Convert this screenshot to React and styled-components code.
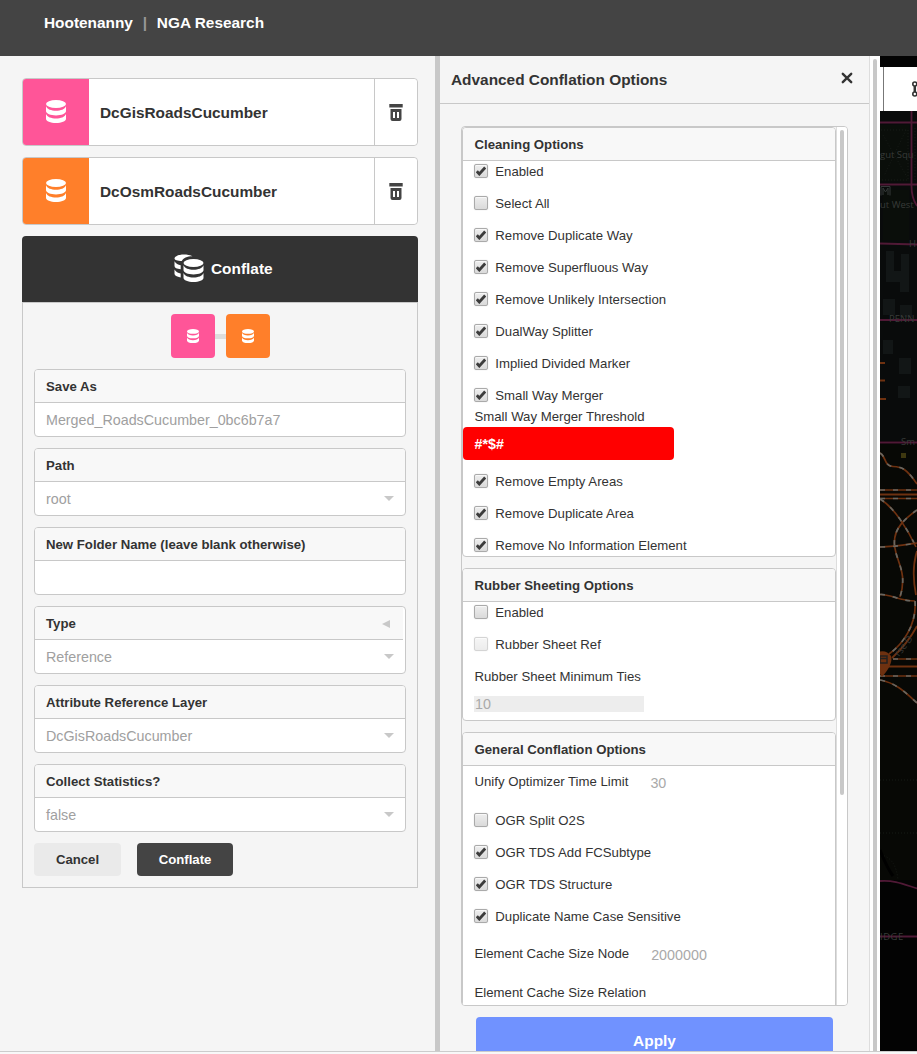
import React from "react";
import styled, { createGlobalStyle } from "styled-components";

const GlobalStyle = createGlobalStyle`
  *, *::before, *::after { box-sizing: border-box; }
  html, body { margin: 0; padding: 0; height: 100%; overflow: hidden; }
  body {
    font-family: "Liberation Sans", Arial, sans-serif;
    font-size: 13.2px;
    color: #333;
    background: #f5f5f5;
  }
  button { font-family: inherit; cursor: pointer; }
  svg { flex-shrink: 0; }
`;

const LINE = "#c8c8c8";

const Page = styled.div`
  display: flex;
  flex-direction: column;
  width: 917px;
  height: 1054px;
`;

const Header = styled.header`
  display: flex;
  flex: 0 0 56px;
  align-items: flex-start;
  gap: 9.8px;
  padding: 14px 0 0 44px;
  background: #444;
  color: #fff;
  font-size: 15.4px;
  font-weight: bold;
  line-height: 18px;
`;

const HeaderDivider = styled.span`
  color: #999;
`;

const Main = styled.main`
  display: flex;
  flex: 0 0 995px;
  overflow: hidden;
`;

const Footer = styled.footer`
  flex: 1;
  border-top: 1px solid #ccc;
  background: #f8f8f8;
`;

const Sidebar = styled.aside`
  display: flex;
  flex: 0 0 440px;
  flex-direction: column;
  gap: 11px;
  padding: 22px 17px 0 22px;
  border-right: 5px solid ${LINE};
  background: #f5f5f5;
`;

const LayerCard = styled.div`
  display: flex;
  height: 68px;
  border: 1px solid ${LINE};
  border-radius: 4px;
  background: #fff;
`;

const LayerSwatch = styled.div`
  display: flex;
  align-items: center;
  justify-content: center;
  width: ${(p) => p.$size}px;
  height: ${(p) => p.$size}px;
  padding-bottom: ${(p) => p.$lift || 0}px;
  border-radius: ${(p) => p.$radius};
  background: ${(p) => p.$color};
`;

const LayerName = styled.div`
  flex: 1;
  padding-left: 11px;
  font-size: 15.4px;
  font-weight: bold;
  line-height: 67px;
`;

const TrashButton = styled.button`
  display: flex;
  align-items: center;
  justify-content: center;
  width: 43px;
  padding: 0;
  border: 0;
  border-left: 1px solid ${LINE};
  border-radius: 0 4px 4px 0;
  background: #fff;
`;

const ConflateHeader = styled.div`
  display: flex;
  align-items: center;
  gap: 7px;
  height: 66px;
  padding-left: 152px;
  border-radius: 4px 4px 0 0;
  background: #333;
  color: #fff;
  font-size: 15.4px;
  font-weight: bold;
  line-height: 17px;

  svg { margin-bottom: 2px; }
`;

const ConflateTitle = styled.span`
  padding-bottom: 1px;
`;

const ConflateBody = styled.div`
  display: flex;
  flex-direction: column;
  gap: 11px;
  padding: 11px;
  border: 1px solid ${LINE};
`;

const SourcePair = styled.div`
  display: flex;
  align-items: center;
  padding-left: 137px;
`;

const SourceLink = styled.span`
  width: 11px;
  height: 5px;
  background: #ddd;
`;

const FieldBox = styled.div`
  height: 68px;
  border: 1px solid ${LINE};
  border-radius: 4px;
  background: #fff;
  overflow: hidden;
`;

const FieldLabel = styled.div`
  display: flex;
  align-items: center;
  justify-content: space-between;
  height: 33px;
  margin-right: ${(p) => (p.$inset ? "2px" : "0")};
  padding: 0 13px 0 11px;
  border-bottom: 1px solid ${LINE};
  background: #f8f8f8;
  font-weight: bold;

  svg { margin-top: 2px; }
`;

const FieldValue = styled.div`
  display: flex;
  align-items: center;
  justify-content: space-between;
  height: 33px;
  padding: 1px 11px 0 11px;
  color: #a0a0a0;
  font-size: 14.3px;

  svg { margin-bottom: 2px; }
`;

const ButtonRow = styled.div`
  display: flex;
  gap: 16px;
`;

const FormButton = styled.button`
  width: ${(p) => p.$width}px;
  height: 33px;
  padding: 0;
  border: 0;
  border-radius: 4px;
  background: ${(p) => (p.$primary ? "#444" : "#eaeaea")};
  color: ${(p) => (p.$primary ? "#fff" : "#333")};
  font-size: 13.2px;
  font-weight: bold;
`;

const AdvancedPanel = styled.section`
  flex: 0 0 430px;
  border-right: 1px solid #ddd;
  background: #f5f5f5;
`;

const PanelHeader = styled.div`
  display: flex;
  align-items: center;
  justify-content: space-between;
  height: 48px;
  padding: 0 16px 0 11px;
  border-bottom: 1px solid ${LINE};
  font-size: 15.4px;
  font-weight: bold;

  svg { margin-bottom: 3px; }
`;

const OptionsBox = styled.div`
  display: flex;
  width: 387px;
  height: 880px;
  margin: 22px 0 0 21px;
  border: 1px solid ${LINE};
  border-radius: 4px;
  overflow: hidden;
`;

const OptionsList = styled.div`
  display: flex;
  flex: 0 0 374px;
  flex-direction: column;
  gap: 11px;
`;

const ScrollTrack = styled.div`
  flex: 1;
  padding: 3px 0 0 3px;
  border-left: 1px solid #ddd;
  background: #fff;
`;

const ScrollThumb = styled.div`
  width: 4px;
  height: ${(p) => p.$height}px;
  border-radius: 2px;
  background: #c8c8c8;
`;

const OptionSection = styled.div`
  flex: 0 0 ${(p) => p.$height}px;
  border: 1px solid ${LINE};
  border-radius: 4px;
  background: #fff;
  overflow: hidden;
`;

const SectionTitle = styled.div`
  height: 33px;
  padding-left: 11.5px;
  border-bottom: 1px solid ${LINE};
  background: #f8f8f8;
  font-weight: bold;
  line-height: 33px;
`;

const CheckRow = styled.label`
  display: flex;
  align-items: center;
  gap: 7px;
  height: 20px;
  margin-bottom: ${(p) => (p.$tight ? 0 : 12)}px;
  padding-left: 11px;
`;

const CheckMarkBox = styled.span`
  display: flex;
  align-items: center;
  justify-content: center;
  width: 14.3px;
  height: 14.3px;
  border: 1px solid #aaa;
  border-radius: 2px;
  background: linear-gradient(#eee, #dadada);
  box-shadow: inset 0 1px 0 rgba(255, 255, 255, 0.6), 0 0 1px rgba(0, 0, 0, 0.25);
  opacity: ${(p) => (p.$disabled ? 0.5 : 1)};
`;

const PlainLabel = styled.div`
  height: ${(p) => p.$height}px;
  padding-left: 11.5px;
  line-height: ${(p) => p.$height + 1}px;
`;

const ErrorInput = styled.div`
  width: 211px;
  height: 33px;
  margin-bottom: 11px;
  padding-left: 11.5px;
  border-radius: 4px;
  background: #f00;
  color: #fff;
  font-size: 14.3px;
  font-weight: bold;
  line-height: 35px;
`;

const DisabledInput = styled.div`
  width: 170px;
  height: 16px;
  margin: 10px 0 0 11px;
  padding-left: 1px;
  background: #ededed;
  color: #a9a9a9;
  font-size: 14.3px;
  line-height: 17px;
`;

const ValueRow = styled.div`
  display: flex;
  gap: 22px;
  height: 32px;
  margin-bottom: 12px;
  padding-left: 11.5px;
  line-height: 32px;
`;

const RowValue = styled.span`
  padding-top: 1px;
  color: #a9a9a9;
  font-size: 14.3px;
`;

const ApplyButton = styled.button`
  display: block;
  width: 357px;
  height: 48px;
  margin: 11px 0 0 36px;
  padding: 0;
  border: 0;
  border-radius: 4px;
  background: #7092ff;
  color: #fff;
  font-size: 15.4px;
  font-weight: bold;
`;

const PageScroll = styled.div`
  flex: 0 0 10px;
  padding: 3px 0 0 3px;
  background: #fff;
`;

const PageThumb = styled.div`
  width: 4px;
  height: 992px;
  border-radius: 2px 2px 0 0;
  background: #c8c8c8;
`;

const MapArea = styled.div`
  flex: 1;
  height: 995px;
  background: #030303;
  overflow: hidden;
`;

const Cylinder = () => (
  <>
    <ellipse cx="10" cy="4" rx="10" ry="4" />
    <path d="M0 6.200C1.200 9.200 5.200 10.700 10 10.700s8.800-1.500 10-4.500V11c0 2.600-4.500 4.400-10 4.400S0 13.600 0 11z" />
    <path d="M0 14C1.200 17 5.200 18.500 10 18.500s8.800-1.500 10-4.500v4.700c0 2.600-4.500 4.300-10 4.300S0 21.300 0 18.700z" />
  </>
);

const DatabaseIcon = ({ width, height }) => (
  <svg width={width} height={height} viewBox="0 0 20 23" fill="#fff" preserveAspectRatio="none">
    <Cylinder />
  </svg>
);

const ConflateIcon = () => (
  <svg width="30" height="28" viewBox="0 0 30 28" fill="#fff">
    <path d="M.5 4.500C1 2 5 .5 10 .5c3.400 0 6.500.6 8.500 1.800-5.500.1-9.300 1.700-10.700 4.700C3.500 6.900.5 6 .5 4.500z" />
    <path d="M.5 7.300c1.300 2.300 3.600 3.500 6.200 4v4C2.800 14.800.5 13.800.5 12zM.5 15.500c1.300 2.300 3.600 3.500 6.200 4v4C2.800 22.500.5 21.500.5 19.700z" />
    <g transform="translate(9.500 5)">
      <Cylinder />
    </g>
  </svg>
);

const TrashIcon = () => (
  <svg width="14" height="17" viewBox="0 0 14 17" fill="#444" fillRule="evenodd">
    <path d="M.3 0h13.400v3.500H.3z" />
    <path d="M1.500 5h11v10q0 2-2 2h-7q-2 0-2-2zM4 8v6h2V8zM8 8v6h2V8z" />
  </svg>
);

const CloseIcon = () => (
  <svg width="12" height="12" viewBox="0 0 12 12" stroke="#333" strokeWidth="2.400" strokeLinecap="round">
    <path d="M1.800 1.800l8.400 8.400M10.200 1.800l-8.400 8.400" />
  </svg>
);

const CheckIcon = () => (
  <svg width="10" height="10" viewBox="0 0 10 10" fill="none" stroke="#3c3c3c" strokeWidth="2.800">
    <path d="M.8 5.200L3.300 8 9.200 1.500" />
  </svg>
);

const CaretIcon = () => (
  <svg width="10" height="5" viewBox="0 0 10 5" fill="#c8c8c8">
    <path d="M0 0h10L5 5z" />
  </svg>
);

const LeftCaretIcon = () => (
  <svg width="8" height="8" viewBox="0 0 8 8" fill="#c8c8c8">
    <path d="M8 0v8L0 4z" />
  </svg>
);

const paths = [
  "M880 453C886 456 884 466 893 466.500S906 468 917 484",
  "M880 490H917M880 498.500H917",
  "M880 499C894 507 908 530 916 547",
  "M917 510C906 518 893 528 894.500 545S908 572 900 597",
  "M880 547C893 547 904 545 917 543",
  "M880 594.500C890 594 900 601 915 601",
  "M915 601C917 625 902 645 889 654",
  "M893 659H917M880 676H917",
  "M880 680C896 683 905 692 917 703",
];

const MapView = () => (
  <svg width="37" height="995" viewBox="880 56 37 995" fill="none">
    <rect x="880" y="111" width="37" height="330" fill="#090b0b" />
    <rect x="880" y="444" width="37" height="436" fill="#070805" />
    <g fill="#0a0e0a">
      <rect x="880" y="125" width="29" height="56" />
      <path d="M883 190h26v50h-26z" />
    </g>
    <g fill="#121616">
      <path d="M886 251h8v20h7v-17h8v38h-9v-10h-14zM883 299h12v16h-12zM900 305h12v12h-12z" />
      <path d="M899 358h12v16h-12zM898 386h12v12h-12zM883 340h10v14h-10z" />
    </g>
    <g stroke="#171b17" strokeDasharray="1 2">
      <path d="M881 130h27v50h-27M883 135l24 42M906 130l-22 46M915 128v52M880 780H917M880 833H917M881 855Q896 858 898 880" />
    </g>
    <g stroke="#501936" strokeWidth="1.800">
      <path d="M880 122.500H917M880 184.500H917M880 243.500L917 244.500M880 320H917M880 442.500H917M880 881C895 880 903 884 917 888.500M880 936.500H917" />
      <path d="M911.500 111V186Q911.500 198 917 206" />
    </g>
    <path d="M880 850Q887 868 893 876" stroke="#000" strokeWidth="3" />
    <g stroke="#6e3110" strokeWidth="1.800">
      <path d="M880 363h5M880 380.500h5M880 399h6M880 494.500H917M880 666.500H917" />
      <path d="M917 551Q911 570 916 595M917 626Q908 643 892 658" />
    </g>
    {paths.map((d) => (
      <g key={d} strokeWidth="1.700">
        <path d={d} stroke="#6e3110" />
        <path d={d} stroke="#686660" strokeDasharray="5 8" />
      </g>
    ))}
    <path d="M882 677L871 661a11 11 0 0 1 20-5c2 6-3 14-9 21z" fill="#6e3110" />
    <path d="M880 656h7v7h-7zM880 658.500h7" stroke="#24211f" strokeWidth="1.500" />
    <rect x="901" y="453" width="5" height="5" fill="#3e3810" />
    <g fill="#383b39" fontFamily="Open Sans, sans-serif" fontSize="9.500">
      <text x="880" y="158">gut Squ</text>
      <text x="880" y="208">ut West</text>
      <text x="889" y="322">PENN</text>
      <text x="901" y="445">Sm</text>
      <text x="909" y="247">H</text>
      <text x="880" y="940" letterSpacing=".5">IDGE</text>
      <text x="899" y="657" transform="rotate(-52 899 657)">rse D</text>
    </g>
    <path d="M881 195.500v-9h9v9M883 195v-7l2.500 4 2.500-4v7" stroke="#343838" />
    <path d="M880 67h37v44h-37z" fill="#fff" />
    <path d="M883.500 67v44" stroke="#777" />
    <g stroke="#333" strokeWidth="1.600">
      <circle cx="914.800" cy="84" r="2" />
      <circle cx="914.800" cy="94" r="2" />
      <path d="M914.800 86v6" strokeWidth="2.500" />
    </g>
  </svg>
);

const layers = [
  { name: "DcGisRoadsCucumber", color: "#ff5598" },
  { name: "DcOsmRoadsCucumber", color: "#ff7f2a" },
];

const fields = [
  { label: "Save As", value: "Merged_RoadsCucumber_0bc6b7a7" },
  { label: "Path", value: "root", select: true },
  { label: "New Folder Name (leave blank otherwise)", value: "" },
  { label: "Type", value: "Reference", select: true, collapsible: true },
  { label: "Attribute Reference Layer", value: "DcGisRoadsCucumber", select: true },
  { label: "Collect Statistics?", value: "false", select: true },
];

const Option = ({ label, checked = true, disabled, tight }) => (
  <CheckRow $tight={tight}>
    <CheckMarkBox $disabled={disabled}>{checked && <CheckIcon />}</CheckMarkBox>
    {label}
  </CheckRow>
);

export default function App() {
  return (
    <Page>
      <GlobalStyle />
      <Header>
        <span>Hootenanny</span>
        <HeaderDivider>|</HeaderDivider>
        <span>NGA Research</span>
      </Header>
      <Main>
        <Sidebar>
          {layers.map((layer) => (
            <LayerCard key={layer.name}>
              <LayerSwatch $size={66} $lift={1} $radius="3px 0 0 3px" $color={layer.color}>
                <DatabaseIcon width={20} height={23} />
              </LayerSwatch>
              <LayerName>{layer.name}</LayerName>
              <TrashButton aria-label="Remove layer">
                <TrashIcon />
              </TrashButton>
            </LayerCard>
          ))}
          <div>
            <ConflateHeader>
              <ConflateIcon />
              <ConflateTitle>Conflate</ConflateTitle>
            </ConflateHeader>
            <ConflateBody>
              <SourcePair>
                <LayerSwatch $size={44} $radius="4px" $color={layers[0].color}>
                  <DatabaseIcon width={12} height={14} />
                </LayerSwatch>
                <SourceLink />
                <LayerSwatch $size={44} $radius="4px" $color={layers[1].color}>
                  <DatabaseIcon width={12} height={14} />
                </LayerSwatch>
              </SourcePair>
              {fields.map((field) => (
                <FieldBox key={field.label}>
                  <FieldLabel $inset={field.collapsible}>
                    {field.label}
                    {field.collapsible && <LeftCaretIcon />}
                  </FieldLabel>
                  <FieldValue>
                    {field.value}
                    {field.select && <CaretIcon />}
                  </FieldValue>
                </FieldBox>
              ))}
              <ButtonRow>
                <FormButton $width={87}>Cancel</FormButton>
                <FormButton $width={96} $primary>
                  Conflate
                </FormButton>
              </ButtonRow>
            </ConflateBody>
          </div>
        </Sidebar>
        <AdvancedPanel>
          <PanelHeader>
            Advanced Conflation Options
            <CloseIcon />
          </PanelHeader>
          <OptionsBox>
            <OptionsList>
              <OptionSection $height={430}>
                <SectionTitle>Cleaning Options</SectionTitle>
                <Option label="Enabled" />
                <Option label="Select All" checked={false} />
                <Option label="Remove Duplicate Way" />
                <Option label="Remove Superfluous Way" />
                <Option label="Remove Unlikely Intersection" />
                <Option label="DualWay Splitter" />
                <Option label="Implied Divided Marker" />
                <Option label="Small Way Merger" tight />
                <PlainLabel $height={22}>Small Way Merger Threshold</PlainLabel>
                <ErrorInput>#*$#</ErrorInput>
                <Option label="Remove Empty Areas" />
                <Option label="Remove Duplicate Area" />
                <Option label="Remove No Information Element" />
              </OptionSection>
              <OptionSection $height={153}>
                <SectionTitle>Rubber Sheeting Options</SectionTitle>
                <Option label="Enabled" checked={false} />
                <Option label="Rubber Sheet Ref" checked={false} disabled />
                <PlainLabel $height={20}>Rubber Sheet Minimum Ties</PlainLabel>
                <DisabledInput>10</DisabledInput>
              </OptionSection>
              <OptionSection $height={320}>
                <SectionTitle>General Conflation Options</SectionTitle>
                <ValueRow>
                  Unify Optimizer Time Limit
                  <RowValue>30</RowValue>
                </ValueRow>
                <Option label="OGR Split O2S" checked={false} />
                <Option label="OGR TDS Add FCSubtype" />
                <Option label="OGR TDS Structure" />
                <Option label="Duplicate Name Case Sensitive" />
                <ValueRow>
                  Element Cache Size Node
                  <RowValue>2000000</RowValue>
                </ValueRow>
                <PlainLabel $height={20}>Element Cache Size Relation</PlainLabel>
              </OptionSection>
            </OptionsList>
            <ScrollTrack>
              <ScrollThumb $height={665} />
            </ScrollTrack>
          </OptionsBox>
          <ApplyButton>Apply</ApplyButton>
        </AdvancedPanel>
        <PageScroll>
          <PageThumb />
        </PageScroll>
        <MapArea>
          <MapView />
        </MapArea>
      </Main>
      <Footer />
    </Page>
  );
}
